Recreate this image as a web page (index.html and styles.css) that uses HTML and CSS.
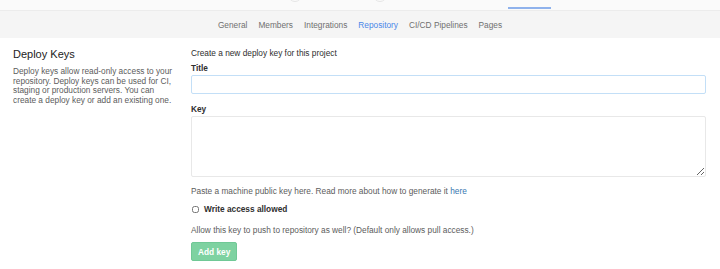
FILE: index.html
```html
<!DOCTYPE html>
<html lang="en">
<head>
  <meta charset="UTF-8" />
  <title>Repository Settings</title>
  <link rel="stylesheet" href="styles.css">
</head>
<body>
  <div class="top-bar">
    <span class="top-avatar"></span>
    <span class="top-avatar second"></span>
    <span class="top-active"></span>
  </div>

  <div class="sub-nav">
    <a href="#" class="sub-nav-item">General</a>
    <a href="#" class="sub-nav-item">Members</a>
    <a href="#" class="sub-nav-item">Integrations</a>
    <a href="#" class="sub-nav-item active">Repository</a>
    <a href="#" class="sub-nav-item">CI/CD Pipelines</a>
    <a href="#" class="sub-nav-item">Pages</a>
  </div>

  <div class="settings">
    <div class="settings-info">
      <h4>Deploy Keys</h4>
      <p>Deploy keys allow read-only access to your repository. Deploy keys can be used for CI, staging or production servers. You can create a deploy key or add an existing one.</p>
    </div>

    <form class="settings-form">
      <p class="form-intro">Create a new deploy key for this project</p>

      <label class="form-label" for="key-title">Title</label>
      <input type="text" id="key-title" class="form-control focused">

      <label class="form-label key-label" for="key-body">Key</label>
      <textarea id="key-body" class="form-control key-area"></textarea>

      <p class="help">Paste a machine public key here. Read more about how to generate it <a href="#">here</a></p>

      <label class="check-row">
        <input type="checkbox">
        <span>Write access allowed</span>
      </label>

      <p class="help push-help">Allow this key to push to repository as well? (Default only allows pull access.)</p>

      <button type="button" class="btn-create" disabled>Add key</button>
    </form>
  </div>
</body>
</html>
```

FILE: styles.css
```css
* {
  box-sizing: border-box;
}

body {
  margin: 0;
  font-family: 'Liberation Sans', Arial, sans-serif;
  font-size: 8.3px;
  color: #2e2e2e;
  background: #fff;
}

.top-bar {
  height: 11px;
  background: #fafafa;
  border-bottom: 1px solid #ececec;
  display: flex;
  align-items: flex-end;
  overflow: hidden;
}

.top-avatar {
  width: 14px;
  height: 14px;
  border-radius: 50%;
  border: 1px solid #e6e6e6;
  align-self: flex-start;
  margin-top: -12px;
  margin-left: 288px;
}

.top-avatar.second {
  margin-left: 71px;
}

.top-active {
  width: 43px;
  height: 2px;
  background: #8fb2ec;
  margin-left: 121px;
  margin-bottom: 1px;
}

.sub-nav {
  height: 27px;
  background: #f5f5f5;
  display: flex;
  justify-content: center;
  align-items: center;
  gap: 11px;
}

.sub-nav-item {
  color: #707070;
  text-decoration: none;
}

.sub-nav-item.active {
  color: #4a86e8;
}

.settings {
  display: grid;
  grid-template-columns: 162px 1fr;
  gap: 16px;
  padding: 10px 14px 0 13px;
}

.settings-info h4 {
  margin: 0;
  font-size: 11px;
  line-height: 13px;
  font-weight: normal;
  color: #222;
}

.settings-info p {
  margin: 6px 0 0;
  line-height: 9.7px;
  color: #5c5c5c;
}

.settings-form {
  display: flex;
  flex-direction: column;
  align-items: flex-start;
}

.form-intro {
  margin: 0;
  line-height: 10px;
  color: #2e2e2e;
}

.form-label {
  margin-top: 5px;
  line-height: 10px;
  font-weight: bold;
  color: #2e2e2e;
}

.form-label + .form-control {
  margin-top: 2px;
}

.form-control {
  width: 100%;
  height: 19px;
  border: 1px solid #e8e8e8;
  border-radius: 2px;
  background: #fff;
  font: inherit;
  padding: 2px 5px;
  outline: none;
}

.form-control.focused {
  border-color: #c3dff7;
}

.form-label.key-label {
  margin-top: 10px;
}

.key-area {
  height: 61px;
  resize: vertical;
}

.help {
  margin: 0;
  line-height: 10px;
  color: #5c5c5c;
}

.key-area + .help {
  margin-top: 9px;
}

.help a {
  color: #3777b0;
  text-decoration: none;
}

.check-row {
  display: flex;
  align-items: center;
  gap: 5px;
  margin-top: 8px;
  line-height: 10px;
  font-weight: bold;
  color: #2e2e2e;
}

.check-row input {
  width: 7px;
  height: 7px;
  margin: 0 0 0 1px;
}

.push-help {
  margin-top: 11px;
}

.btn-create {
  margin-top: 7px;
  height: 19px;
  padding: 0 6px;
  border: 1px solid #70c896;
  border-radius: 2px;
  background: #7ed2a1;
  color: #fff;
  font: inherit;
  font-weight: bold;
}
```
